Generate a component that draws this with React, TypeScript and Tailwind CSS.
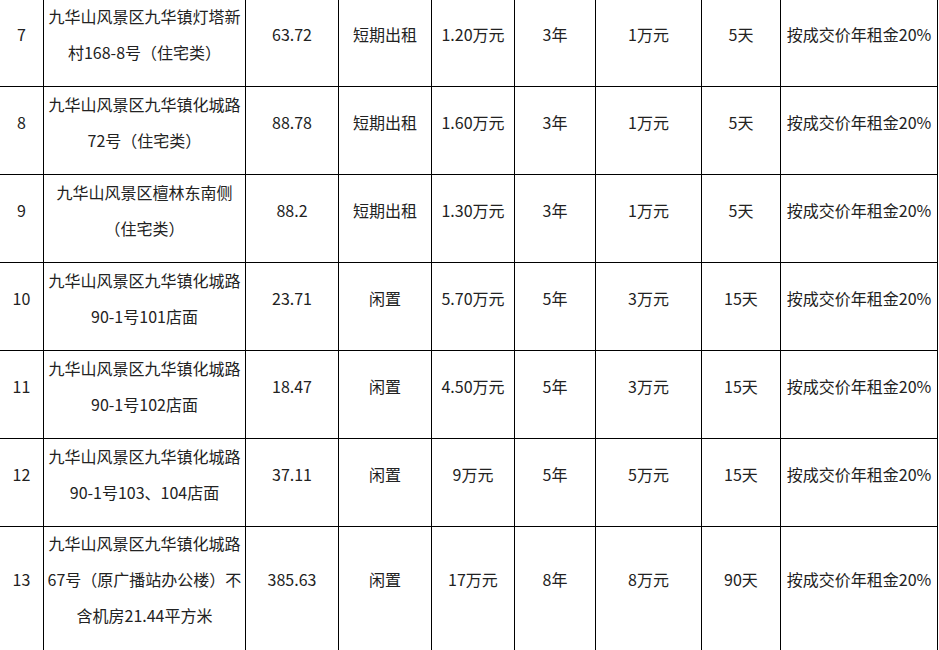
import React from "react";

type Row = {
  no: string;
  addr: string[];
  area: string;
  status: string;
  price: string;
  years: string;
  deposit: string;
  days: string;
  note: string;
};

const rows: Row[] = [
  { no: "7", addr: ["九华山风景区九华镇灯塔新", "村168-8号（住宅类）"], area: "63.72", status: "短期出租", price: "1.20万元", years: "3年", deposit: "1万元", days: "5天", note: "按成交价年租金20%" },
  { no: "8", addr: ["九华山风景区九华镇化城路", "72号（住宅类）"], area: "88.78", status: "短期出租", price: "1.60万元", years: "3年", deposit: "1万元", days: "5天", note: "按成交价年租金20%" },
  { no: "9", addr: ["九华山风景区檀林东南侧", "（住宅类）"], area: "88.2", status: "短期出租", price: "1.30万元", years: "3年", deposit: "1万元", days: "5天", note: "按成交价年租金20%" },
  { no: "10", addr: ["九华山风景区九华镇化城路", "90-1号101店面"], area: "23.71", status: "闲置", price: "5.70万元", years: "5年", deposit: "3万元", days: "15天", note: "按成交价年租金20%" },
  { no: "11", addr: ["九华山风景区九华镇化城路", "90-1号102店面"], area: "18.47", status: "闲置", price: "4.50万元", years: "5年", deposit: "3万元", days: "15天", note: "按成交价年租金20%" },
  { no: "12", addr: ["九华山风景区九华镇化城路", "90-1号103、104店面"], area: "37.11", status: "闲置", price: "9万元", years: "5年", deposit: "5万元", days: "15天", note: "按成交价年租金20%" },
  { no: "13", addr: ["九华山风景区九华镇化城路", "67号（原广播站办公楼）不", "含机房21.44平方米"], area: "385.63", status: "闲置", price: "17万元", years: "8年", deposit: "8万元", days: "90天", note: "按成交价年租金20%" },
];

function Cell({ children, last }: { children: React.ReactNode; last: boolean }) {
  return (
    <div
      className={
        "bg-white flex flex-col items-center justify-center text-center whitespace-nowrap " +
        (last ? "h-[140px] pb-[32px]" : "h-[87px] pb-[14px]")
      }
    >
      <div className="mt-[-4px]">{children}</div>
    </div>
  );
}

export default function App() {
  return (
    <div className="w-[939px] h-[650px] overflow-hidden bg-white">
      <div
        className="ml-[-1px] mt-[-2px] w-[939px] grid grid-cols-[43px_201px_92px_92px_82px_80px_105px_78px_156px] gap-px bg-black border border-black text-[16px] leading-[36px] text-[#222]"
        style={{ fontFamily: '"Noto Sans CJK SC", "Noto Sans", sans-serif' }}
      >
        {rows.map((r, i) => {
          const last = i === rows.length - 1;
          return (
            <React.Fragment key={r.no}>
              <Cell last={last}>{r.no}</Cell>
              <Cell last={last}>
                {r.addr.map((l) => (
                  <div key={l}>{l}</div>
                ))}
              </Cell>
              <Cell last={last}>{r.area}</Cell>
              <Cell last={last}>{r.status}</Cell>
              <Cell last={last}>{r.price}</Cell>
              <Cell last={last}>{r.years}</Cell>
              <Cell last={last}>{r.deposit}</Cell>
              <Cell last={last}>{r.days}</Cell>
              <Cell last={last}>{r.note}</Cell>
            </React.Fragment>
          );
        })}
      </div>
    </div>
  );
}
